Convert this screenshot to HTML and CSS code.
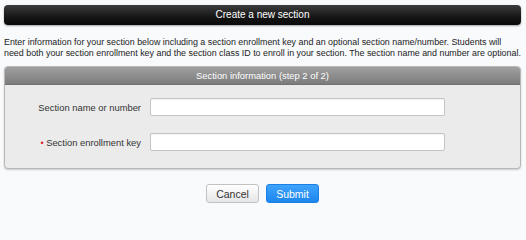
FILE: index.html
```html
<!DOCTYPE html>
<html>
<head>
<meta charset="utf-8">
<link rel="stylesheet" href="styles.css">
</head>
<body>
<div class="page">
  <div class="title-bar">Create a new section</div>
  <p class="intro">Enter information for your section below including a section enrollment key and an optional section name/number. Students will need both your section enrollment key and the section class ID to enroll in your section. The section name and number are optional.</p>
  <div class="panel">
    <div class="panel-head">Section information (step 2 of 2)</div>
    <div class="panel-body">
      <label class="field-label" for="name">Section name or number</label>
      <input class="field-input" id="name" type="text">
      <label class="field-label" for="key"><span class="req">•</span> Section enrollment key</label>
      <input class="field-input" id="key" type="text">
    </div>
  </div>
  <div class="actions">
    <button class="btn btn-cancel">Cancel</button>
    <button class="btn btn-submit">Submit</button>
  </div>
</div>
</body>
</html>
```

FILE: styles.css
```css
html, body {
  margin: 0;
  padding: 0;
}
body {
  background: #f8fafc;
  font-family: "Liberation Sans", Arial, sans-serif;
  color: #222;
}
.page {
  padding: 5px 5px 0 4px;
}
.title-bar {
  height: 20px;
  line-height: 20px;
  border-radius: 4px;
  background: linear-gradient(#3c3c3c, #161616 60%, #0a0a0a);
  box-shadow: 0 1px 2px rgba(0,0,0,0.35);
  color: #fff;
  font-size: 10px;
  text-align: center;
}
.intro {
  margin: 12px 0 0 0;
  font-size: 8.9px;
  line-height: 11px;
  color: #222;
}
.panel {
  margin-top: 7px;
  border: 1px solid #b8b8b8;
  border-radius: 4px;
  background: #ebebeb;
  box-shadow: 0 1px 2px rgba(0,0,0,0.2);
  overflow: hidden;
}
.panel-head {
  height: 17px;
  line-height: 17px;
  background: linear-gradient(#a0a0a0, #7c7c7c);
  color: #fff;
  font-size: 9.4px;
  text-align: center;
  border-bottom: 1px solid #707070;
}
.panel-body {
  display: grid;
  grid-template-columns: 136px 295px;
  column-gap: 9px;
  row-gap: 17px;
  align-items: center;
  padding: 13px 0 17px 0;
}
.field-label {
  text-align: right;
  font-size: 9.4px;
  color: #333;
}
.req {
  color: #e0262b;
  font-size: 9px;
}
.field-input {
  box-sizing: border-box;
  height: 18px;
  margin: 0;
  border: 1px solid #c4c4c4;
  border-radius: 2px;
  background: #fff;
  box-shadow: inset 0 1px 1px rgba(0,0,0,0.05);
}
.actions {
  display: flex;
  justify-content: center;
  gap: 7px;
  margin-top: 15px;
}
.btn {
  box-sizing: border-box;
  width: 53px;
  height: 19px;
  border-radius: 3px;
  font-family: "Liberation Sans", Arial, sans-serif;
  font-size: 10.5px;
  padding: 0;
}
.btn-cancel {
  border: 1px solid #c2c2c2;
  background: linear-gradient(#ffffff, #e6e6e6);
  color: #333;
}
.btn-submit {
  border: 1px solid #1c7fe6;
  background: linear-gradient(#3ea3fb, #1c86ee);
  color: #fff;
}
```
